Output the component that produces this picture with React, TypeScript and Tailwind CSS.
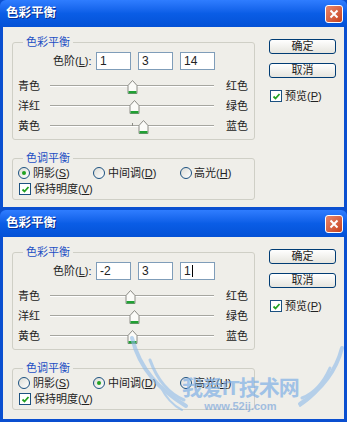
import React from 'react';

type DialogProps = {
  levels: [number, number, number];
  tone: 0 | 1 | 2;
  cursor?: boolean;
  height: string;
};

const U = ({ c }: { c: string }) => <span className="underline">{c}</span>;

const Thumb = ({ value }: { value: number }) => (
  <svg
    width="11"
    height="16"
    viewBox="0 0 11 16"
    className="absolute top-[-7px]"
    style={{ left: 82 + value * 0.82 - 5.5 }}
  >
    <path d="M1 6.5 L5.5 1.5 L10 6.5 V14.5 H1 Z" fill="#fbfbf8" stroke="#8c8c86" strokeWidth="1" />
    <rect x="1.5" y="12" width="8" height="2.5" fill="#21a134" />
  </svg>
);

const SliderRow = ({ left, right, value }: { left: string; right: string; value: number }) => (
  <div className="flex h-[20px] items-center pl-[5px]">
    <span className="w-[32px]">{left}</span>
    <div className="relative h-[2px] w-[164px] border-t border-[#a6a6a0] bg-white">
      <div className="absolute left-[82px] top-[-3px] h-[3px] w-px bg-[#8c8c86]" />
      <Thumb value={value} />
    </div>
    <span className="ml-[12px]">{right}</span>
  </div>
);

const Radio = ({ on }: { on: boolean }) => (
  <span className="flex h-[12px] w-[12px] items-center justify-center rounded-full border border-[#1c5180] bg-gradient-to-br from-[#dcdcd6] to-white">
    {on && <span className="h-[4px] w-[4px] rounded-full bg-[#21a121]" />}
  </span>
);

const Check = () => (
  <span className="flex h-[12px] w-[12px] items-center justify-center border border-[#1c5180] bg-white">
    <svg width="9" height="9" viewBox="0 0 9 9">
      <path d="M1.5 4.5 L3.5 6.5 L7.5 2" fill="none" stroke="#21a121" strokeWidth="1.8" />
    </svg>
  </span>
);

const Input = ({ value, cursor }: { value: string; cursor?: boolean }) => (
  <div className="flex h-[18px] w-[35px] items-center border border-[#7f9db9] bg-white pl-[3px] text-[12px]">
    {value}
    {cursor && <span className="ml-px h-[12px] w-px bg-black" />}
  </div>
);

const Button = ({ children }: { children: React.ReactNode }) => (
  <div className="flex h-[15px] w-[67px] items-center justify-center rounded-[3px] border border-[#003c74] bg-gradient-to-b from-white to-[#e6e5de] text-[11px] leading-none">
    {children}
  </div>
);

const Dialog = ({ levels, tone, cursor, height }: DialogProps) => (
  <div className={`flex w-full flex-col ${height}`}>
    <div className="flex h-[27px] items-center justify-between rounded-t-[6px] bg-gradient-to-b from-[#2f7dff] via-[#0a5de6] to-[#0451d6] pl-[6px] pr-[4px]">
      <span className="text-[12.5px] font-bold text-white [text-shadow:1px_1px_0_#0a2f8c]">色彩平衡</span>
      <div className="flex h-[18px] w-[18px] items-center justify-center rounded-[3px] border border-white bg-gradient-to-br from-[#e8866a] to-[#c6401a]">
        <svg width="10" height="10" viewBox="0 0 10 10">
          <path d="M1.5 1.5 L8.5 8.5 M8.5 1.5 L1.5 8.5" stroke="white" strokeWidth="2" />
        </svg>
      </div>
    </div>
    <div className="flex flex-1 border-x-[3px] border-b-[3px] border-[#0a4fd0] bg-[#efeee9] pl-[9px] pt-[8px] text-[11px] leading-none text-[#222]">
      <div className="flex w-[243px] flex-col">
        <fieldset className="min-w-0 rounded-[3px] border border-[#cfcfc6] pb-[3px]">
          <legend className="ml-[10px] px-[3px] leading-[14px] text-[#1d4fc4]">色彩平衡</legend>
          <div className="flex items-center pl-[40px] pt-[3px]">
            <span className="w-[43px]">
              色阶(<U c="L" />):
            </span>
            <div className="flex gap-[7px]">
              <Input value={String(levels[0])} />
              <Input value={String(levels[1])} />
              <Input value={String(levels[2])} cursor={cursor} />
            </div>
          </div>
          <div className="mt-[6px] flex flex-col">
            <SliderRow left="青色" right="红色" value={levels[0]} />
            <SliderRow left="洋红" right="绿色" value={levels[1]} />
            <SliderRow left="黄色" right="蓝色" value={levels[2]} />
          </div>
        </fieldset>
        <fieldset className="mt-[11px] min-w-0 rounded-[3px] border border-[#cfcfc6] pb-[2px]">
          <legend className="ml-[10px] px-[3px] leading-[14px] text-[#1d4fc4]">色调平衡</legend>
          <div className="flex h-[16px] items-center pl-[5px]">
            <div className="flex w-[75px] items-center gap-[3px]">
              <Radio on={tone === 0} />
              <span>
                阴影(<U c="S" />)
              </span>
            </div>
            <div className="flex w-[87px] items-center gap-[3px]">
              <Radio on={tone === 1} />
              <span>
                中间调(<U c="D" />)
              </span>
            </div>
            <div className="flex items-center gap-[2px]">
              <Radio on={tone === 2} />
              <span>
                高光(<U c="H" />)
              </span>
            </div>
          </div>
          <div className="flex h-[16px] items-center gap-[3px] pl-[6px]">
            <Check />
            <span>
              保持明度(<U c="V" />)
            </span>
          </div>
        </fieldset>
      </div>
      <div className="ml-[14px] mt-[4px] flex flex-col">
        <Button>确定</Button>
        <div className="mt-[9px]">
          <Button>取消</Button>
        </div>
        <div className="mt-[12px] flex items-center gap-[3px] pl-px">
          <Check />
          <span>
            预览(<U c="P" />)
          </span>
        </div>
      </div>
    </div>
  </div>
);

const App: React.FC = () => {
  return (
    <div className="relative flex h-[422px] w-[347px] flex-col overflow-hidden bg-[#0a4fd0] font-['Liberation_Sans','Noto_Sans_CJK_SC',sans-serif]">
      <Dialog levels={[1, 3, 14]} tone={0} height="h-[210px]" />
      <Dialog levels={[-2, 3, 1]} tone={1} cursor height="h-[212px]" />

      {/* watermark */}
      <svg className="pointer-events-none absolute left-0 top-[330px] opacity-60" width="347" height="92" viewBox="0 0 347 92">
        <g fill="none" stroke="#8fbce9" strokeLinecap="round">
          <path d="M132 8 C140 40 160 60 186 76" strokeWidth="4" />
          <path d="M150 30 C158 52 170 64 184 70" strokeWidth="3" />
          <path d="M160 56 C166 68 174 76 182 80" strokeWidth="2" />
          <path d="M342 18 C335 45 318 62 300 74" strokeWidth="4" />
          <path d="M330 38 C322 56 312 64 302 68" strokeWidth="3" />
          <path d="M318 60 C312 68 306 72 300 76" strokeWidth="2" />
        </g>
      </svg>
      <div className="pointer-events-none absolute left-[182px] top-[376px] flex flex-col items-center opacity-70">
        <span className="text-[21px] font-bold leading-[24px] tracking-[-1px] text-[#7fb0e6]">我爱IT技术网</span>
        <span className="text-[11px] font-bold leading-[12px] text-[#7fa9dc]">www.52ij.com</span>
      </div>
    </div>
  );
};

export default App;
